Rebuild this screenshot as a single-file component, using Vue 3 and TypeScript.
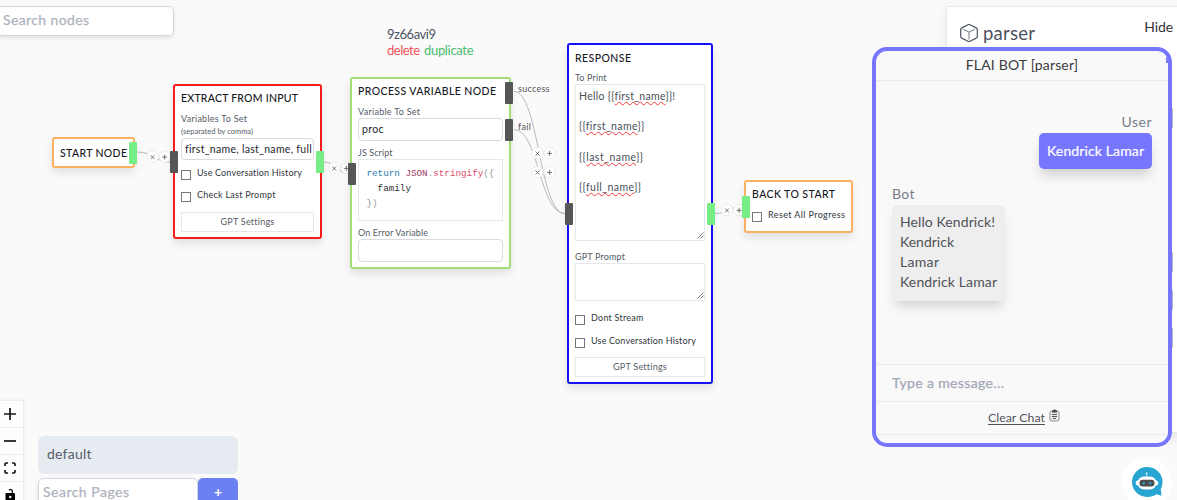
<script setup lang="ts">
import type { Directive } from 'vue'

/* Tracks a label out (or in) so that it spans the given number of pixels. */
const vFit: Directive<HTMLElement, number> = {
  mounted(el, { value }) {
    const count = (el.textContent ?? '').length
    if (count < 2) return
    const natural = el.getBoundingClientRect().width
    el.style.letterSpacing = `${((value - natural) / (count - 1)).toFixed(3)}px`
  },
}

interface Point { x: number; y: number }

const edges: string[] = [
  'M137 152 C154 152 154 162 171 162',
  'M324 162 C336 162 336 173 348 173',
  'M514 91.5 C539 91.5 539 213.5 565 213.5',
  'M514 129.5 C539 129.5 539 213.5 565 213.5',
  'M715 213.5 C729 213.5 729 206.5 742 206.5',
]

const edgeButtons: Point[] = [
  { x: 152.5, y: 156.7 },
  { x: 334.3, y: 168 },
  { x: 537.5, y: 153 },
  { x: 537.5, y: 172 },
  { x: 727, y: 210 },
]

const replies = [
  { text: 'Hello Kendrick!', width: 95 },
  { text: 'Kendrick', width: 54 },
  { text: 'Lamar', width: 39 },
  { text: 'Kendrick Lamar', width: 97 },
]

const prints = [
  { before: 'Hello {{', name: 'first_name', after: '}}!', width: 96 },
  { before: '{{', name: 'first_name', after: '}}', width: 65 },
  { before: '{{', name: 'last_name', after: '}}', width: 64 },
  { before: '{{', name: 'full_name', after: '}}', width: 62 },
]
</script>

<template>
  <main class="app">
    <div class="search-nodes"><span v-fit="86">Search nodes</span></div>

    <svg class="edges" width="1177" height="500" viewBox="0 0 1177 500">
      <path v-for="d in edges" :key="d" :d="d" class="edge" />
      <g v-for="(b, i) in edgeButtons" :key="i" class="edge-button">
        <circle :cx="b.x" :cy="b.y" r="5.7" />
        <circle :cx="b.x + 12.3" :cy="b.y" r="5.7" />
        <path :d="`M${b.x - 2} ${b.y - 1.5} l4 4 m0 -4 l-4 4`" />
        <path :d="`M${b.x + 9.6} ${b.y + 0.4} h5 m-2.5 -2.5 v5`" />
      </g>
    </svg>

    <div class="node-tools">
      <div><span v-fit="49">9z66avi9</span></div>
      <div class="links">
        <span v-fit="33" class="delete">delete</span>
        <span v-fit="49.5" class="duplicate">duplicate</span>
      </div>
    </div>

    <section class="node start">
      <h3><span v-fit="67">START NODE</span></h3>
      <i class="handle out"></i>
    </section>

    <section class="node extract">
      <h3><span v-fit="117">EXTRACT FROM INPUT</span></h3>
      <div class="label"><span v-fit="66">Variables To Set</span></div>
      <div class="hint"><span v-fit="72">(separated by comma)</span></div>
      <div class="field"><span v-fit="126.5">first_name, last_name, full</span></div>
      <label class="check"><i class="box"></i><span v-fit="105">Use Conversation History</span></label>
      <label class="check"><i class="box"></i><span v-fit="78.5">Check Last Prompt</span></label>
      <div class="settings"><span v-fit="53.5">GPT Settings</span></div>
      <i class="handle in"></i>
      <i class="handle out"></i>
    </section>

    <section class="node process">
      <h3><span v-fit="138">PROCESS VARIABLE NODE</span></h3>
      <div class="label"><span v-fit="62">Variable To Set</span></div>
      <div class="field"><span v-fit="21.5">proc</span></div>
      <div class="label"><span v-fit="34.5">JS Script</span></div>
      <pre class="code"><span class="kw">return</span> <span class="cls">JSON</span><span class="pun">.</span><span class="fn">stringify</span><span class="pun">({</span>
  family
<span class="pun">})</span></pre>
      <div class="label"><span v-fit="70">On Error Variable</span></div>
      <div class="field"></div>
      <i class="handle in"></i>
      <i class="handle success"></i>
      <i class="handle fail"></i>
      <span class="port port-success"><span v-fit="31.5">success</span></span>
      <span class="port port-fail"><span v-fit="13">fail</span></span>
    </section>

    <section class="node response">
      <h3><span v-fit="56">RESPONSE</span></h3>
      <div class="label"><span v-fit="31.5">To Print</span></div>
      <div class="area big">
        <div v-for="(p, i) in prints" :key="i" class="print">
          <span v-fit="p.width">{{ p.before }}<u>{{ p.name }}</u>{{ p.after }}</span>
        </div>
        <svg class="grip" width="7" height="7"><path d="M.5 6.5l6-6M3.5 6.5l3-3" /></svg>
      </div>
      <div class="label"><span v-fit="50">GPT Prompt</span></div>
      <div class="area small">
        <svg class="grip" width="7" height="7"><path d="M.5 6.5l6-6M3.5 6.5l3-3" /></svg>
      </div>
      <label class="check"><i class="box"></i><span v-fit="52.5">Dont Stream</span></label>
      <label class="check"><i class="box"></i><span v-fit="105">Use Conversation History</span></label>
      <div class="settings"><span v-fit="53.5">GPT Settings</span></div>
      <i class="handle in"></i>
      <i class="handle out"></i>
    </section>

    <section class="node back">
      <h3><span v-fit="83">BACK TO START</span></h3>
      <label class="check"><i class="box"></i><span v-fit="77">Reset All Progress</span></label>
      <i class="handle in"></i>
    </section>

    <nav class="controls">
      <div><svg width="14" height="14"><path d="M1 7h12M7 1v12" /></svg></div>
      <div><svg width="14" height="14"><path d="M1 7h12" /></svg></div>
      <div><svg width="14" height="14"><path d="M2 5V3.2Q2 2 3.2 2H5M9 2h1.8Q12 2 12 3.2V5M12 9v1.8Q12 12 10.8 12H9M5 12H3.2Q2 12 2 10.8V9" /></svg></div>
      <div><svg width="14" height="14"><rect x="2.500" y="5" width="9.500" height="8.500" rx="1" /><path class="shackle" d="M6 2.200Q8.500 .5 9.300 3V5" /><circle cx="7.300" cy="9" r="1.200" /></svg></div>
    </nav>

    <aside class="pages">
      <div class="page"><span v-fit="44.5">default</span></div>
      <div class="page-search">
        <div class="page-input"><span v-fit="86">Search Pages</span></div>
        <button>+</button>
      </div>
    </aside>

    <aside class="inspector">
      <svg class="cube" width="20" height="20" viewBox="0 0 20 20">
        <path class="faint" d="M4 6.300l6 2.700 6-2.700M10 9V16.500" />
        <path d="M9 1.700Q10 1.200 11 1.700L17.200 4.900Q18.300 5.500 18.300 6.600V13.400Q18.300 14.500 17.200 15.100L11 18.300Q10 18.800 9 18.300L2.800 15.100Q1.700 14.500 1.700 13.400V6.600Q1.700 5.500 2.800 4.900z" />
      </svg>
      <span class="name"><span v-fit="52">parser</span></span>
      <span class="hide"><span v-fit="29">Hide</span></span>
    </aside>
    <div class="ticks"><i></i><i></i><i></i><i></i></div>

    <section class="chat">
      <header><span v-fit="112.5">FLAI BOT [parser]</span></header>
      <div class="messages">
        <div class="who right"><span v-fit="30">User</span></div>
        <div class="bubble mine"><span v-fit="97">Kendrick Lamar</span></div>
        <div class="who bot"><span v-fit="22.5">Bot</span></div>
        <div class="bubble theirs">
          <div v-for="r in replies" :key="r.text"><span v-fit="r.width">{{ r.text }}</span></div>
        </div>
      </div>
      <div class="composer"><span v-fit="112">Type a message...</span></div>
      <footer>
        <span v-fit="57" class="clear">Clear Chat</span>
        <svg width="11" height="13" viewBox="0 0 11 13">
          <rect class="board" x="1" y="2" width="9" height="10" rx="1.500" />
          <path class="clip" d="M3 3.500V1.500h1.500V.5h2v1H8v2z" />
          <path class="lines" d="M3 5.500h5M3 7.500h5M4 9.500h3" />
        </svg>
      </footer>
      <i class="notch"></i>
    </section>

    <div class="bot-button">
      <svg width="32" height="32" viewBox="0 0 32 32">
        <path fill="#28a5d0" d="M16 1A15 15 0 1 0 16 31C20 31 23 30 25.500 28.200L30.500 29.800L29.800 23A15 15 0 0 0 16 1z" />
        <circle cx="15.700" cy="7.500" r=".9" fill="#fff" />
        <path d="M15.700 8v3" stroke="#8fd2e8" />
        <rect x="6.500" y="10.500" width="19" height="13" rx="6.500" fill="#fff" />
        <rect x="4.800" y="14.500" width="22.400" height="5" rx="2" fill="#fff" />
        <rect x="8.500" y="13.800" width="15" height="6.700" rx="3.300" fill="#4c4c4e" />
        <circle cx="12.700" cy="17.200" r="1.200" fill="#28a5d0" />
        <circle cx="19.200" cy="17.200" r="1.200" fill="#28a5d0" />
      </svg>
    </div>
  </main>
</template>

<style>
body { margin: 0; background: #fafafa; overflow: hidden; }
</style>

<style scoped>
* { box-sizing: border-box; }
.app { position: relative; width: 1177px; height: 500px; overflow: hidden; background: #fafafa; color: #374151; font-family: Lato, "Open Sans", sans-serif; font-size: 14px; }
span { white-space: pre; display: inline-block; }
.search-nodes { position: absolute; left: -3px; top: 6px; width: 177px; height: 30px; padding-left: 5px; line-height: 26px; border: 1px solid #d5d7df; border-radius: 5px; background: #fff; color: #afb3bf; -webkit-text-stroke: .25px #afb3bf; box-shadow: 0 2px 4px rgba(0,0,0,.1); }
.edges { position: absolute; left: 0; top: 0; }
.edge { fill: none; stroke: #b8b8ba; stroke-width: 1; }
.edge-button circle { fill: #fff; stroke: #e5e5e7; stroke-width: .8; }
.edge-button path { fill: none; stroke: #555; stroke-width: .8; }
.node-tools { position: absolute; left: 387px; top: 26px; font-size: 13px; line-height: 16px; color: #4b5563; }
.links { display: flex; gap: 4.500px; }
.delete { color: #ef5458; }
.duplicate { color: #4bbd70; }

.node { position: absolute; border: 2px solid; border-radius: 3px; background: #fff; box-shadow: 0 5px 9px rgba(0,0,0,.1); padding: 0 6px; }
h3 { margin: 0; height: 20px; line-height: 20px; font-size: 10.500px; font-weight: 500; color: #15181e; }
.check span { flex: none; }
.label, .hint { height: 12px; line-height: 12px; font-size: 9px; color: #555b66; }
.hint { font-size: 7.500px; }
.field { height: 23px; line-height: 21px; border: 1px solid #d8dade; border-radius: 4px; padding-left: 3px; font-size: 10.500px; color: #24282f; overflow: hidden; }
.check { display: flex; gap: 6px; height: 12px; line-height: 12px; font-size: 9px; color: #30353d; }
.box { flex: none; width: 10px; height: 10px; border: 1px solid #767676; background: #fff; transform: translateY(3px); }
.settings { height: 20px; line-height: 18px; border: 1px solid #e5e7eb; text-align: center; font-size: 9px; color: #565b65; }
.handle { position: absolute; width: 8px; height: 22px; border-radius: 1px; background: #77ed86; }
.port { position: absolute; font-size: 9px; line-height: 12px; color: #555; }

.start { left: 52px; top: 137px; width: 83px; height: 31px; border-color: #fbb062; padding-top: 4px; }
.start .out { left: 75px; top: 3px; }
.extract { left: 173px; top: 84px; width: 149px; height: 155px; border-color: #f81b1b; padding-top: 2px; }
.extract h3 { margin-bottom: 5px; }
.extract .label { height: 13px; }
.extract .field { height: 22px; line-height: 20px; }
.extract .check { margin-top: 7px; }
.extract .check + .check { margin-top: 10px; }
.extract .settings { margin-top: 11px; }
.in { background: #565656; }
.extract .in { left: -5px; top: 65px; }
.extract .out { left: 141px; top: 65px; }
.process { left: 350px; top: 77px; width: 161px; height: 192px; border-color: #a1de75; padding-top: 2px; }
.process h3 { margin-bottom: 5px; }
.process .field + .label { margin-top: 6px; }
.process .in { left: -4px; top: 84px; }
.process .success { left: 153px; top: 3px; background: #565656; }
.process .fail { left: 153px; top: 40px; background: #565656; }
.port-success { left: 166px; top: 4px; }
.port-fail { left: 166px; top: 42px; }
.code { margin: 0 0 6px; height: 62px; border: 1px solid #e5e7eb; padding: 6px 7.500px; font: 9.280px/15px "Liberation Mono", monospace; color: #333; }
.code span { display: inline; }
.kw { color: #287cad; }
.cls { color: #a33a63; }
.fn { color: #dd4a68; }
.pun { color: #999; }
.response { left: 567px; top: 43px; width: 146px; height: 341px; border-color: #1212f5; padding-top: 3px; }
.response h3 { margin-bottom: 4px; }
.area { position: relative; border: 1px solid #e5e7eb; padding: 4px 3px; font-size: 10.500px; color: #4b5058; }
.big { height: 157px; margin-bottom: 10px; }
.small { height: 38px; margin-bottom: 11px; }
.print { height: 30.300px; line-height: 14px; }
.print u { text-decoration: underline wavy #f23a3a .8px; text-underline-offset: 1px; text-decoration-skip-ink: none; }
.grip { position: absolute; right: 0; bottom: 1px; }
.grip path { stroke: #777; fill: none; }
.response .check + .check { margin-top: 11px; }
.response .settings { margin-top: 10px; }
.response .in { left: -4px; top: 158px; }
.response .out { left: 138px; top: 158px; }
.back { left: 744px; top: 180px; width: 109px; height: 53px; border-color: #fbb062; padding-top: 2px; }
.back h3 { margin-bottom: 5px; }
.back .in { left: -4px; top: 14px; background: #77ed86; }

.controls { position: absolute; left: 0; top: 401px; width: 23px; height: 110px; background: #fefefe; box-shadow: 0 0 2px 1px rgba(0,0,0,.08); }
.controls div { height: 27px; border-bottom: 1px solid #eee; padding: 6px 0 0 3px; }
.controls svg { display: block; }
.controls path { fill: none; stroke: #161616; stroke-width: 1.700; }
.controls .shackle { stroke-width: 1.300; }
.controls circle { fill: #fff; }
.pages { position: absolute; left: 38px; top: 436px; width: 200px; }
.page { height: 38px; margin-bottom: 4px; line-height: 36px; padding-left: 9px; background: #e6ebf2; border-radius: 6px; color: #555d69; }
.page-search { display: flex; }
.page-input { width: 160px; height: 31px; border: 1px solid #d5d7df; border-radius: 5px; background: #fff; padding-left: 4px; line-height: 26px; color: #afb3bf; -webkit-text-stroke: .25px #afb3bf; box-shadow: 0 2px 5px rgba(0,0,0,.1); }
button { width: 40px; height: 31px; border: 0; border-radius: 5px; background: #6b80f1; color: #fff; font: 700 14px/24px Lato, sans-serif; padding: 0 0 3px; }

.inspector { position: absolute; left: 946px; top: 6px; width: 260px; height: 427px; border: 1px solid #e2e8f0; border-radius: 3px; background: #fff; box-shadow: 0 5px 14px rgba(0,0,0,.08); display: flex; align-items: flex-start; padding: 16px 0 0 12px; }
.cube path { fill: none; stroke: #4b5260; stroke-width: 1.200; }
.cube .faint { stroke: #8b909b; }
.name { margin-left: 4px; font-size: 18.500px; line-height: 20px; color: #4b5260; }
.hide { margin-left: 109px; margin-top: -6px; line-height: 20px; color: #333; }
.ticks { position: absolute; left: 1165px; top: 107px; }
.ticks i { display: block; width: 8px; height: 22px; border-radius: 3px; background: #b4b5c8; }
.ticks i:nth-child(2) { margin-top: 122px; }
.ticks i:nth-child(n+3) { margin-top: 16px; }
.chat { position: absolute; left: 872px; top: 47px; width: 300px; height: 400px; border: 4px solid #7776ff; border-radius: 15px; background: #f9f9f9; color: #505258; overflow: hidden; }
.chat header { height: 30px; line-height: 27px; border-bottom: 1px solid #e9eaec; text-align: center; color: #3b3b40; }
.messages { height: 283px; padding: 31px 16px 0; display: flex; flex-direction: column; }
.who { height: 21px; line-height: 20px; color: #7a7e8c; }
.right { align-self: flex-end; }
.bubble { width: 113px; border-radius: 5px; padding: 0 8px; line-height: 20px; }
.mine { align-self: flex-end; height: 36px; line-height: 35px; background: #7776ff; color: #fff; -webkit-text-stroke: .2px #fff; box-shadow: 0 8px 12px -2px rgba(0,0,0,.17); }
.bot { margin-top: 15px; }
.theirs { height: 96px; padding-top: 7px; background: #eee; box-shadow: 0 8px 12px -3px rgba(0,0,0,.16); }
.composer { height: 38px; padding-left: 16px; line-height: 36px; border-top: 1px solid #e9eaec; border-bottom: 1px solid #e9eaec; color: #a3a8b5; -webkit-text-stroke: .25px #a3a8b5; }
.chat footer { display: flex; justify-content: center; height: 33px; gap: 4px; padding: 7px 0 0 4px; border-bottom: 1px solid #e9eaec; font-size: 12.300px; line-height: 17px; }
.clear { text-decoration: underline; text-underline-offset: 2px; }
.notch { position: absolute; right: 0; top: 6px; width: 2px; height: 6px; background: #7776ff; }
.board { fill: #eee; stroke: #777; stroke-width: .8; }
.clip { fill: #444; }
.lines { stroke: #555; stroke-width: 1; }
.bot-button { position: absolute; left: 1122px; top: 457px; width: 50px; height: 50px; border-radius: 50%; background: #fff; padding: 9px; }
.bot-button svg { display: block; }
</style>
